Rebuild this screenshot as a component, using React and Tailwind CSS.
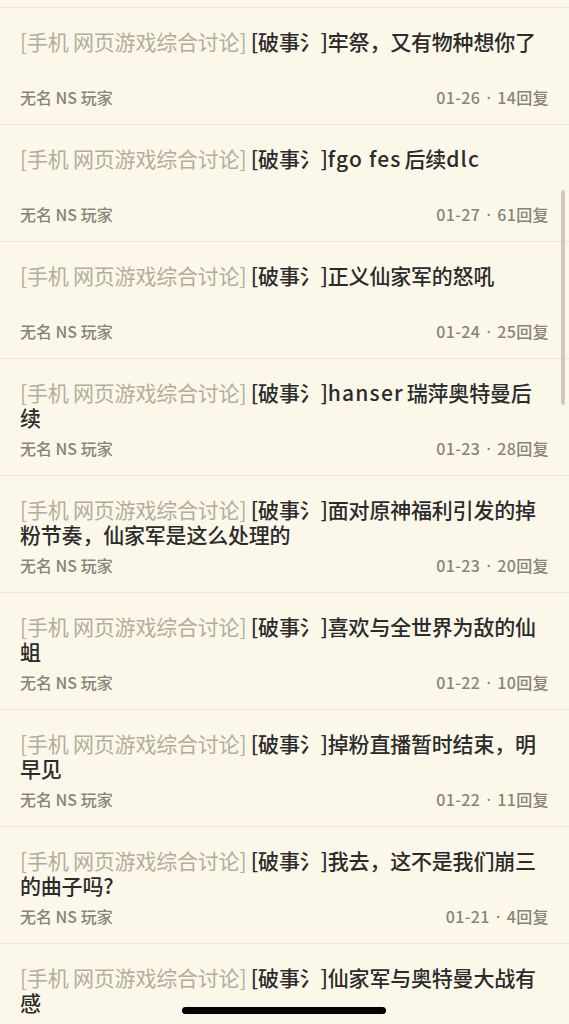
import React from 'react';

const posts = [
  { title: '牢祭，又有物种想你了', date: '01-26', replies: 14 },
  { title: 'fgo fes后续dlc', date: '01-27', replies: 61 },
  { title: '正义仙家军的怒吼', date: '01-24', replies: 25 },
  { title: 'hanser瑞萍奥特曼后续', date: '01-23', replies: 28 },
  { title: '面对原神福利引发的掉粉节奏，仙家军是这么处理的', date: '01-23', replies: 20 },
  { title: '喜欢与全世界为敌的仙蛆', date: '01-22', replies: 10 },
  { title: '掉粉直播暂时结束，明早见', date: '01-22', replies: 11 },
  { title: '我去，这不是我们崩三的曲子吗?', date: '01-21', replies: 4 },
  { title: '仙家军与奥特曼大战有感', date: '01-21', replies: 3 },
];

const font = { fontFamily: '"Noto Sans CJK SC", "Noto Sans", sans-serif' };

const Title = ({ text }) =>
  text.split(/([A-Za-z ]+)/).map((part, i) =>
    /[A-Za-z]/.test(part) ? (
      <span key={i} className="tracking-[1.2px] mr-[3px]">{part}</span>
    ) : (
      <span key={i}>{part}</span>
    )
  );

const PostRow = ({ post }) => (
  <div className="border-t border-[#ebe5d3] px-5 pt-[21px] pb-[17px]">
    <div className="min-h-[50px] max-h-[50px] text-[21px] leading-[25px] tracking-[-0.2px]">
      <span className="text-[#b3ad9b] font-normal">[手机 网页游戏综合讨论]</span>{' '}
      <span className="text-[#2b2b2b] font-medium">
        [破事氵]<Title text={post.title} />
      </span>
    </div>
    <div className="mt-2 flex h-5 items-center justify-between text-[16px] leading-5 font-medium text-[#878478]">
      <span>无名 NS 玩家</span>
      <span className="tracking-[0.4px]">
        {post.date}
        <span className="mx-[6px] font-['Noto_Sans']">·</span>
        {post.replies}回复
      </span>
    </div>
  </div>
);

export default function App() {
  return (
    <div className="relative h-[1024px] w-full overflow-hidden bg-[#fcf8e9]" style={font}>
      <div className="h-[7px]" />
      {posts.map((p) => (
        <PostRow key={p.title} post={p} />
      ))}
      {/* scroll indicator */}
      <div className="absolute right-[4px] top-[190px] h-[215px] w-[4px] rounded-full bg-[#cfcabb]" />
      {/* home indicator */}
      <div className="absolute bottom-[10px] left-[182px] h-[7px] w-[204px] rounded-full bg-black" />
    </div>
  );
}
